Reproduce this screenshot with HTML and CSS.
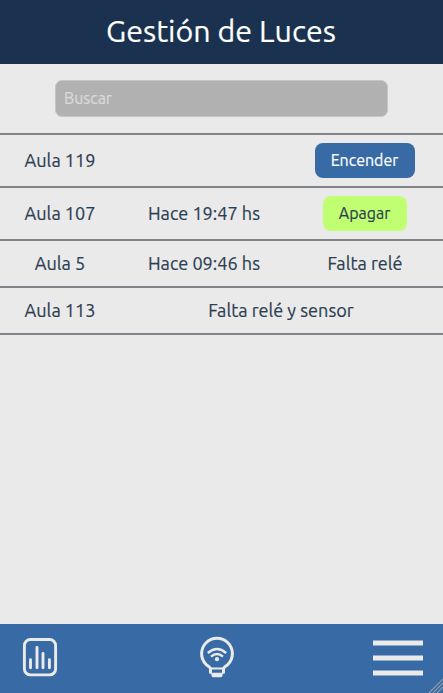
FILE: index.html
```html
<!DOCTYPE html>
<html lang="es">
<head>
<meta charset="utf-8">
<title>Gestión de Luces</title>
<link rel="stylesheet" href="styles.css">
</head>
<body>
<header class="header"><h1 class="title">Gestión de Luces</h1></header>
<main class="main">
  <div class="search"><input class="search-input" type="text" placeholder="Buscar"></div>
  <div class="list">
    <div class="row row-tall"><span class="room">Aula 119</span><span></span><span><button class="btn btn-on">Encender</button></span></div>
    <div class="row row-tall"><span class="room">Aula 107</span><span class="time">Hace 19:47 hs</span><span><button class="btn btn-off">Apagar</button></span></div>
    <div class="row"><span class="room">Aula 5</span><span class="time">Hace 09:46 hs</span><span class="status">Falta relé</span></div>
    <div class="row"><span class="room">Aula 113</span><span class="status wide">Falta relé y sensor</span></div>
  </div>
</main>
<nav class="footer">
  <svg class="icon-chart" width="36" height="40" viewBox="0 0 36 40" fill="none" stroke="#eaeae8" stroke-width="2.9" stroke-linecap="round">
    <rect x="2.4" y="2.5" width="31.2" height="35.4" rx="6"/>
    <path d="M8.5 22.8v8M15 10.5v20.3M21 16.5v14.3M27.4 22.8v8"/>
  </svg>
  <svg class="icon-bulb" width="36" height="42" viewBox="0 -0.4 36 42" fill="none" stroke="#eaeae8" stroke-width="3">
    <path d="M11.8 32.4C11.2 30.6 9.5 29.8 7.1 28.1A15.4 15.4 0 1 1 28.9 28.1C26.5 29.8 24.8 30.6 24.2 32.4"/>
    <path d="M10 31H26V36.4Q26 37.4 25 37.4H23.6V38.8Q23.6 40.8 21.6 40.8H14.4Q12.4 40.8 12.4 38.8V37.4H11Q10 37.4 10 36.4ZM13 33.2V36.4H23V33.2Z" fill="#eaeae8" fill-rule="evenodd" stroke="none"/>
    <path d="M8.8 16.6Q18 8.6 27.2 16.6" stroke-width="2.4"/>
    <path d="M12 20.2Q18 15 24 20.2" stroke-width="2.4"/>
    <circle cx="18" cy="22.8" r="2.1" fill="#eaeae8" stroke="none"/>
  </svg>
  <div class="menu"><i></i><i></i><i></i></div>
  <svg class="grip" width="15" height="14" viewBox="0 0 15 14" stroke="#929caa" stroke-width="1.1"><path d="M1 14L15 0M5 14L15 4M9 14L15 8"/></svg>
</nav>
</body>
</html>
```
FILE: styles.css
```css
* { box-sizing: border-box; }
body {
  margin: 0;
  height: 693px;
  display: flex;
  flex-direction: column;
  overflow: hidden;
  background: #eaeaea;
  color: #2c3e50;
  font-family: Ubuntu, "Noto Sans", sans-serif;
  -webkit-text-stroke: 0.2px;
}
.header {
  height: 64px;
  background: #1a324f;
  display: flex;
  align-items: center;
  justify-content: center;
}
.title {
  margin: 0 1px 2px 0;
  color: #fff;
  font-size: 30.4px;
  font-weight: 400;
  line-height: 40px;
  white-space: nowrap;
}
.main { flex: 1; }
.search {
  height: 69px;
  padding-top: 16px;
  display: flex;
  justify-content: center;
  align-items: flex-start;
}
.search-input {
  width: 333px;
  height: 37px;
  padding: 0 8px 2px;
  border: 1px solid #c6c6c6;
  border-radius: 7px;
  background: #b1b1b1;
  font: 16px Ubuntu, "Noto Sans", sans-serif;
}
.search-input::placeholder { color: #dadada; opacity: 1; }
.list { border-bottom: 2px solid #808489; }
.row {
  height: 47px;
  border-top: 2px solid #808489;
  display: grid;
  grid-template-columns: 120px 168px 154px;
  align-items: center;
  text-align: center;
  font-size: 18.1px;
  white-space: nowrap;
}
.row-tall { height: 53px; }
.room, .time, .status { padding-bottom: 2px; }
.wide { grid-column: 2 / 4; }
.btn {
  display: block;
  margin: 0 auto;
  height: 35px;
  padding: 0 1px 2px 0;
  border: 0;
  border-radius: 8px;
  font: 16px Ubuntu, "Noto Sans", sans-serif;
}
.btn-on { width: 100px; background: #386ba5; color: #fff; }
.btn-off { width: 84px; background: #c0ff72; color: #2c3e50; }
.footer {
  position: relative;
  height: 69px;
  padding: 0 20px 0 22px;
  background: #386ba5;
  display: flex;
  align-items: flex-start;
  justify-content: space-between;
}
.icon-chart { margin-top: 13px; }
.icon-bulb { margin: 12px 0 0 2px; }
.menu {
  margin-top: 16px;
  display: flex;
  flex-direction: column;
  gap: 9px;
}
.menu i {
  width: 50px;
  height: 6px;
  background: #eaeae8;
  border: solid #8eabc9;
  border-width: 1px 0;
}
.grip { position: absolute; right: 0; bottom: 0; }
```
